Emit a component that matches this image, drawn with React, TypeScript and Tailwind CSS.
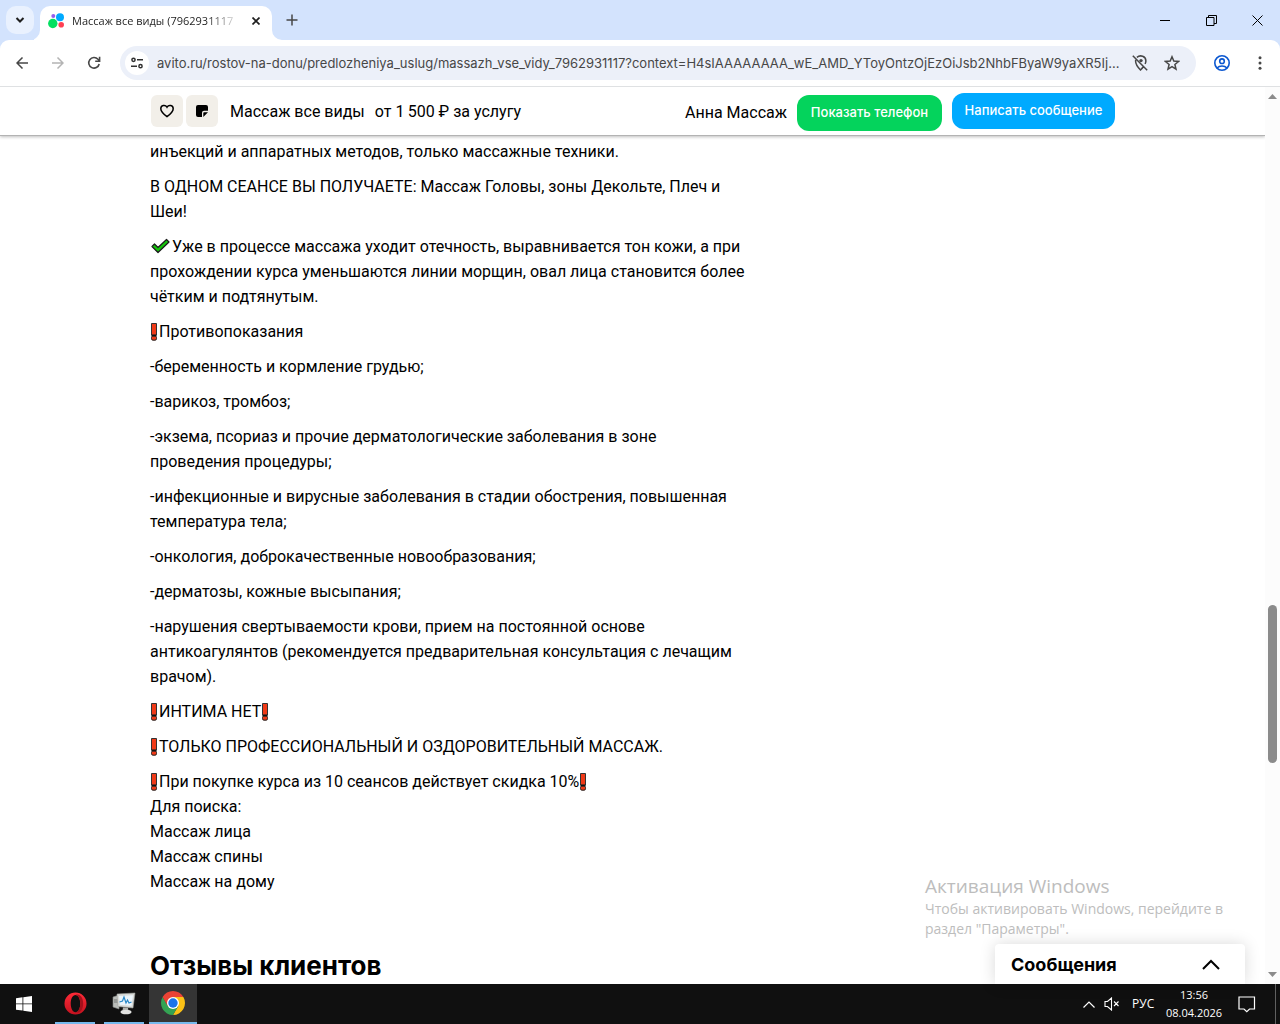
import React from 'react';

function Bang() {
  return (
    <svg className="inline-block h-[18px] w-[9px] align-[-4px]" viewBox="0 0 9 18" role="img" aria-label="❗">
      <path d="M1.500.5h5v11.500h-5z" fill="#f03a17" stroke="#333" />
      <rect x="1.500" y="13" width="5" height="4.200" rx="1.500" fill="#f03a17" stroke="#222" />
      <path d="M1.500 12.500h5" stroke="#111" strokeWidth="1.500" />
    </svg>
  );
}

function Check() {
  return (
    <svg className="inline-block h-4 w-[22px] align-[-2px]" viewBox="0 0 22 16" role="img" aria-label="✔">
      <path d="M2 8.500 4.500 6 8 9.500 16.500 1.500 19 4 8 14.500z" fill="#16c60c" stroke="#1b1b1b" strokeWidth="1.200" strokeLinejoin="round" />
    </svg>
  );
}

function TabStrip() {
  return (
    <header className="flex h-10 shrink-0 items-end bg-[#d3e3fd]">
      <button aria-label="Поиск вкладок" className="mb-[6px] ml-[6px] flex h-7 w-7 items-center justify-center rounded-[10px] bg-[#e9f1fe]">
        <svg className="h-2 w-[10px]" viewBox="0 0 10 8" fill="none" stroke="#1f1f1f" strokeWidth="2"><path d="m1.500 2 3.500 3.500L8.500 2" /></svg>
      </button>
      <svg className="h-[10px] w-[6px] text-white" viewBox="4 0 6 10" fill="currentColor"><path d="M10 0A10 10 0 0 1 0 10h10z" /></svg>
      <div className="flex h-[34px] w-[232px] items-center rounded-t-[10px] bg-white pr-2 pb-1 pl-2">
        <svg className="h-4 w-4 shrink-0" viewBox="0 0 16 16">
          <circle cx="4.800" cy="10.500" r="4.700" fill="#04e061" />
          <circle cx="12" cy="4.200" r="4" fill="#00aaff" />
          <circle cx="13.200" cy="11.800" r="2.800" fill="#ff4053" />
          <circle cx="5.300" cy="3" r="2" fill="#965eeb" />
        </svg>
        <span className="ml-2 flex-1 text-[11px] leading-5 whitespace-nowrap text-[#1f1f1f] [mask-image:linear-gradient(to_right,black_80%,transparent)]">
          Массаж все виды (7962931117
        </span>
        <button aria-label="Закрыть вкладку" className="ml-2 flex h-4 w-4 items-center justify-center">
          <svg className="h-2 w-2" viewBox="0 0 8 8" stroke="#1f1f1f" strokeWidth="1.700"><path d="m.5.5 7 7m0-7-7 7" /></svg>
        </button>
      </div>
      <svg className="h-[10px] w-[10px] text-white" viewBox="0 0 10 10" fill="currentColor"><path d="M0 0a10 10 0 0 0 10 10H0z" /></svg>
      <button aria-label="Новая вкладка" className="mb-[10px] flex h-5 w-5 items-center justify-center">
        <svg className="h-3 w-3" viewBox="0 0 12 12" stroke="#474747" strokeWidth="1.500"><path d="M6 .5v11M.5 6h11" /></svg>
      </button>
      <div className="ml-auto flex h-10">
        <button aria-label="Свернуть" className="flex w-[46px] items-center justify-center">
          <svg className="h-[11px] w-[11px]" viewBox="0 0 11 11" stroke="#000"><path d="M0 5.500h10" /></svg>
        </button>
        <button aria-label="Восстановить" className="flex w-[46px] items-center justify-center">
          <svg className="h-[11px] w-[11px]" viewBox="0 0 11 11" fill="none" stroke="#000"><path d="M.5 2.500h7.500v8H.5zM2.500 2.500v-2h8v8H8" /></svg>
        </button>
        <button aria-label="Закрыть" className="flex w-[46px] items-center justify-center">
          <svg className="h-[11px] w-[11px]" viewBox="0 0 11 11" stroke="#000"><path d="m.5.5 10 10m0-10-10 10" /></svg>
        </button>
      </div>
    </header>
  );
}

function Toolbar() {
  return (
    <div className="bg-[#d3e3fd]">
      <nav className="flex h-[47px] items-center rounded-t-[9px] border-b border-[#dfe1e3] bg-white pr-3 pl-[14px]">
        <button aria-label="Назад" className="flex h-4 w-4 items-center justify-center">
          <svg className="h-3 w-3" viewBox="0 0 12 12" fill="none" stroke="#474747" strokeWidth="1.500"><path d="M12 6H1m5.500-5.500L1 6l5.500 5.500" /></svg>
        </button>
        <button aria-label="Вперёд" className="ml-5 flex h-4 w-4 items-center justify-center">
          <svg className="h-3 w-3" viewBox="0 0 12 12" fill="none" stroke="#b4b4b4" strokeWidth="1.500"><path d="M0 6h11M5.500.5 11 6l-5.500 5.500" /></svg>
        </button>
        <button aria-label="Обновить" className="ml-5 flex h-4 w-4 items-center justify-center">
          <svg className="h-[14px] w-[14px]" viewBox="0 0 14 14" fill="none" stroke="#474747" strokeWidth="1.600"><path d="M12.200 8A5.300 5.300 0 1 1 11 3.300l1.500 1.500M12.600.8v4.400H8.200" /></svg>
        </button>
        <div className="ml-[18px] flex h-[34px] min-w-0 flex-1 items-center rounded-full bg-[#ecf0f9] pr-4 pl-[5px]">
          <button aria-label="Сведения о сайте" className="flex h-6 w-6 shrink-0 items-center justify-center rounded-full bg-white">
            <svg className="h-3 w-3" viewBox="0 0 12 12" fill="none" stroke="#303030" strokeWidth="1.500"><circle cx="2.500" cy="2.800" r="1.600" /><path d="M6 2.800h6M0 9.200h6" /><circle cx="9.500" cy="9.200" r="1.600" /></svg>
          </button>
          <input
            type="text"
            aria-label="Адресная строка"
            className="ml-2 h-5 min-w-0 flex-1 bg-transparent font-['Inter',sans-serif] text-[13px] leading-5 text-[#474747] outline-none"
            defaultValue="avito.ru/rostov-na-donu/predlozheniya_uslug/massazh_vse_vidy_7962931117?context=H4sIAAAAAAAA_wE_AMD_YToyOntzOjEzOiJsb2NhbFByaW9yaXR5Ij..."
          />
          <button aria-label="Доступ к местоположению" className="ml-2 flex h-4 w-4 shrink-0 items-center justify-center">
            <svg className="h-4 w-4" viewBox="0 0 16 16" fill="none" stroke="#474747" strokeWidth="1.500"><path d="m.8.800 14.400 14.400M3.700 4.800C3 8.500 5.500 12 8.500 15c1.200-1.200 2.300-2.500 3.200-3.800M4.900 2.400C8.300-.6 13.900 1.200 13.900 6c0 1-.3 2-.8 3" /><circle cx="9" cy="5.600" r="1.700" fill="#474747" stroke="none" /></svg>
          </button>
          <button aria-label="Добавить в закладки" className="ml-4 flex h-4 w-4 shrink-0 items-center justify-center">
            <svg className="h-4 w-4" viewBox="0 0 16 16" fill="none" stroke="#474747" strokeWidth="1.500"><path d="m8 1.800 1.800 4.300 4.700.4-3.600 3 1.100 4.600L8 11.700l-4 2.400 1.100-4.600-3.600-3 4.700-.4z" /></svg>
          </button>
        </div>
        <button aria-label="Профиль" className="ml-[18px] flex h-4 w-4 shrink-0 items-center justify-center">
          <svg className="h-4 w-4 shrink-0" viewBox="0 0 16 16" fill="none" stroke="#0b57d0" strokeWidth="1.600"><circle cx="8" cy="8" r="7.200" /><circle cx="8" cy="6.200" r="2.300" /><path d="M3 13c2.500-2.700 7.500-2.700 10 0" /></svg>
        </button>
        <button aria-label="Меню" className="ml-[22px] flex h-4 w-4 shrink-0 items-center justify-center">
          <svg className="h-4 w-4" viewBox="0 0 16 16" fill="#474747"><circle cx="8" cy="2.800" r="1.500" /><circle cx="8" cy="8" r="1.500" /><circle cx="8" cy="13.200" r="1.500" /></svg>
        </button>
      </nav>
    </div>
  );
}

function ItemBar() {
  return (
    <div className="relative z-10 h-[49px] shrink-0 border-b border-[#b3b3b3] bg-white shadow-[0_1px_3px_rgba(0,0,0,0.25)]">
      <div className="ml-[151px] flex h-12 max-w-[964px] items-center text-[16px] text-black">
        <button aria-label="В избранное" className="flex h-8 w-8 items-center justify-center rounded-[6px] bg-[#f2efe9]">
          <svg className="h-[14px] w-[14px]" viewBox="0 0 14 14" fill="none" stroke="#000" strokeWidth="1.500"><path d="M7 12.600C3.500 10 .8 7.500.8 4.700c0-3.400 4.400-4.500 6.200-1.500 1.800-3 6.200-1.900 6.200 1.500 0 2.800-2.700 5.300-6.200 7.900z" /></svg>
        </button>
        <button aria-label="Заметка" className="ml-[3px] flex h-8 w-8 items-center justify-center rounded-[6px] bg-[#f2efe9]">
          <svg className="h-3 w-3" viewBox="0 0 12 12"><path d="M2 0h8a2 2 0 0 1 2 2v3.800H8a2 2 0 0 0-2 2V12H2a2 2 0 0 1-2-2V2a2 2 0 0 1 2-2zM7.300 12V8a.8.8 0 0 1 .8-.8H12z" /></svg>
        </button>
        <div className="ml-3 flex gap-[10px] pt-[2px] whitespace-nowrap">
          <span>Массаж все виды</span>
          <span>от 1&thinsp;500 ₽ за услугу</span>
        </div>
        <div className="mt-1 ml-auto flex items-center gap-[10px] whitespace-nowrap">
          <a href="#seller">Анна Массаж</a>
          <button className="h-9 w-[145px] rounded-[12px] bg-[#04d35c] font-['Inter',sans-serif] text-[13px] font-medium text-white">Показать телефон</button>
        </div>
        <button className="ml-[10px] h-9 w-[163px] rounded-[12px] bg-[#00aaff] font-['Inter',sans-serif] text-[13px] font-medium text-white">Написать сообщение</button>
      </div>
    </div>
  );
}

function Article() {
  return (
    <article className="ml-[150px] max-w-[620px] pt-[3px] text-[16px] leading-[25px] text-black">
      <div className="flex flex-col gap-[10px]">
        <p>инъекций и аппаратных методов, только массажные техники.</p>
        <p>В ОДНОМ СЕАНСЕ ВЫ ПОЛУЧАЕТЕ: Массаж Головы, зоны Декольте, Плеч и<br />Шеи!</p>
        <p><Check />Уже в процессе массажа уходит отечность, выравнивается тон кожи, а при<br />прохождении курса уменьшаются линии морщин, овал лица становится более<br />чётким и подтянутым.</p>
        <p><Bang />Противопоказания</p>
        <p>-беременность и кормление грудью;</p>
        <p>-варикоз, тромбоз;</p>
        <p>-экзема, псориаз и прочие дерматологические заболевания в зоне<br />проведения процедуры;</p>
        <p>-инфекционные и вирусные заболевания в стадии обострения, повышенная<br />температура тела;</p>
        <p>-онкология, доброкачественные новообразования;</p>
        <p>-дерматозы, кожные высыпания;</p>
        <p>-нарушения свертываемости крови, прием на постоянной основе<br />антикоагулянтов (рекомендуется предварительная консультация с лечащим<br />врачом).</p>
        <p><Bang />ИНТИМА НЕТ<Bang /></p>
        <p><Bang />ТОЛЬКО ПРОФЕССИОНАЛЬНЫЙ И ОЗДОРОВИТЕЛЬНЫЙ МАССАЖ.</p>
        <p><Bang />При покупке курса из 10 сеансов действует скидка 10%<Bang /><br />Для поиска:<br />Массаж лица<br />Массаж спины<br />Массаж на дому</p>
      </div>
      <h2 className="mt-[54px] font-['Inter',sans-serif] text-[26px] leading-9 font-bold">Отзывы клиентов</h2>
    </article>
  );
}

function Taskbar() {
  return (
    <footer className="flex h-10 shrink-0 items-stretch bg-[#101010] text-white">
      <button aria-label="Пуск" className="flex w-12 items-center justify-center">
        <svg className="h-4 w-4" viewBox="0 0 16 16" fill="#fff"><path d="M0 2.200 6.500 1.300v6.200H0zM7.300 1.200 16 0v7.500H7.300zM0 8.300h6.500v6.300L0 13.700zM7.300 8.300H16V16l-8.700-1.200z" /></svg>
      </button>
      <button aria-label="Opera" className="ml-[7px] flex w-10 items-center justify-center border-b-2 border-[#76b9ed]">
        <svg className="h-[23px] w-[23px]" viewBox="0 0 24 24">
          <defs><linearGradient id="opera" x1="0" y1="0" x2="0" y2="1"><stop offset="0" stopColor="#ff2b38" /><stop offset="1" stopColor="#c4121f" /></linearGradient></defs>
          <path fill="url(#opera)" fillRule="evenodd" d="M12 .5a11.500 11.500 0 1 0 0 23 11.500 11.500 0 0 0 0-23zM12 3c3 0 5 4 5 9s-2 9-5 9-5-4-5-9 2-9 5-9z" />
          <path fill="#a4101b" d="M12 3c4-2 8 2 8 9s-4 11-8 9c3 0 5-4 5-9s-2-9-5-9z" />
        </svg>
      </button>
      <button aria-label="Монитор ресурсов" className="ml-[9px] flex w-10 items-center justify-center border-b-2 border-[#76b9ed]">
        <svg className="h-[23px] w-6" viewBox="0 0 24 23">
          <path d="m1 5 6-2v14l-6-2z" fill="#b9bcb9" stroke="#858885" strokeWidth=".6" />
          <path d="M2 8h4M2 10h4" stroke="#707370" />
          <path d="m5 2 18-1-2 15-15-1.500z" fill="#d8dad7" stroke="#9b9e9b" strokeWidth=".6" />
          <path d="m7 4 14-.8-1.500 10.500L8 12.800z" fill="#eaf4fb" />
          <path d="m7.500 10 3-1 1.500-4 2 6 1.500-3 1.500 3 2.500-1" fill="none" stroke="#2787c7" strokeWidth="1.200" />
          <path d="m11 15.500 5 .5.500 3-6-.5z" fill="#aeb1ae" />
          <ellipse cx="14" cy="20" rx="5.500" ry="2.300" fill="#e2e3e1" />
        </svg>
      </button>
      <button aria-label="Chrome" className="ml-[5px] flex w-12 items-center justify-center border-b-2 border-[#76b9ed] bg-[#353535]">
        <svg className="h-6 w-6" viewBox="0 0 24 24">
          <path d="M12 6h10.390A12 12 0 0 1 12 24l5.200-9z" fill="#fbc116" />
          <path d="M17.200 15 12 24A12 12 0 0 1 1.610 6l5.200 9z" fill="#34a353" />
          <path d="M1.610 6A12 12 0 0 1 22.390 6H12l-5.200 9z" fill="#ea4335" />
          <circle cx="12" cy="12" r="6" fill="#fff" /><circle cx="12" cy="12" r="4.700" fill="#1a73e8" />
        </svg>
      </button>
      <div className="ml-auto flex items-center text-[12px]">
        <button aria-label="Скрытые значки">
          <svg className="h-[7px] w-3" viewBox="0 0 12 7" fill="none" stroke="#fff" strokeWidth="1.200"><path d="m.5 6.500 5.500-5.500 5.500 5.500" /></svg>
        </button>
        <button aria-label="Звук выключен" className="ml-[9px]">
          <svg className="h-[14px] w-4" viewBox="0 0 16 14" fill="none" stroke="#fff" strokeWidth="1.100"><path d="M1 4.500h2.500L7.500 1v12L3.500 9.500H1zM10 4.500l4.500 4.500m0-4.500L10 9" /></svg>
        </button>
        <button className="ml-3 w-[22px]" aria-label="РУС, язык ввода">РУС</button>
        <div className="ml-[12px] w-[56px] text-center text-[11px] leading-[18px] whitespace-nowrap"><p>13:56</p><p>08.04.2026</p></div>
        <button aria-label="Уведомления" className="mr-[19px] ml-[16px]">
          <svg className="h-[18px] w-[18px]" viewBox="0 0 18 18" fill="none" stroke="#fff" strokeWidth="1.200"><path d="M1 2h15.500v12H11.500l-2.700 2.700L6 14H1z" /></svg>
        </button>
        <div className="h-full w-[5px] border-l border-[#606060]" />
      </div>
    </footer>
  );
}

export default function App() {
  return (
    <div className="flex h-screen flex-col overflow-hidden bg-white font-['Open_Sans','Noto_Sans',sans-serif]">
      <TabStrip />
      <Toolbar />
      <main className="relative flex min-h-0 flex-1 font-['Roboto',sans-serif]">
        <div className="min-w-0 flex-1 overflow-hidden">
          <ItemBar />
          <Article />
        </div>
        <div className="flex w-[15px] shrink-0 flex-col items-center bg-[#fcfcfc] py-[7px]">
          <svg className="h-[5px] w-[9px] shrink-0" viewBox="0 0 9 5" fill="#8b8b8b"><path d="m0 5 4.500-5L9 5z" /></svg>
          <div className="flex-[506]" />
          <div className="w-[9px] flex-[158] rounded-full bg-[#8b8b8b]" />
          <div className="flex-[209]" />
          <svg className="h-[5px] w-[9px] shrink-0" viewBox="0 0 9 5" fill="#8b8b8b"><path d="m0 0 4.500 5L9 0z" /></svg>
        </div>
        <aside className="absolute right-[35px] bottom-0 w-[320px] text-[#bdbdbd]">
          <div className="font-['Open_Sans','Noto_Sans',sans-serif]">
            <p className="text-[19px] leading-[26px]">Активация Windows</p>
            <p className="pb-[5px] text-[14px] leading-5">Чтобы активировать Windows, перейдите в<br />раздел "Параметры".</p>
          </div>
          <button className="ml-auto flex h-10 w-[250px] items-center justify-between rounded-t-[4px] bg-white pr-[25px] pl-4 text-black shadow-[0_0_16px_rgba(0,0,0,0.15)]">
            <span className="font-['Inter',sans-serif] text-[18px] font-bold">Сообщения</span>
            <svg className="h-[11px] w-[18px]" viewBox="0 0 18 11" fill="none" stroke="#000" strokeWidth="2"><path d="M1 10 9 2l8 8" /></svg>
          </button>
        </aside>
      </main>
      <Taskbar />
    </div>
  );
}
